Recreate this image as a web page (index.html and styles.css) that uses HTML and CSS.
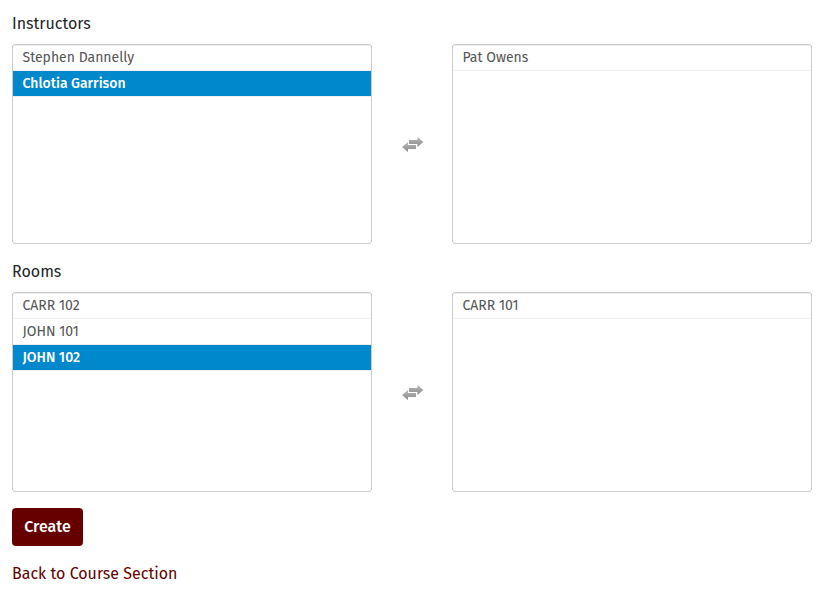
FILE: index.html
```
<!DOCTYPE html>
<html lang="en">
<head>
<meta charset="utf-8">
<title>Course Section</title>
<link rel="stylesheet" href="styles.css">
</head>
<body>
<svg width="0" height="0" class="defs">
  <defs>
    <linearGradient id="g" x1="0" y1="0" x2="0" y2="1"><stop offset="0" stop-color="#bbb"/><stop offset="1" stop-color="#8a8a8a"/></linearGradient>
    <symbol id="switch" viewBox="0 0 22 16">
      <path fill="url(#g)" d="M7 4H15.4V1L21.4 6L15.4 11V8H7Z"/>
      <path fill="url(#g)" d="M14 9H6V6L0 11L6 16V13H14Z"/>
      <path fill="none" stroke="#fff" stroke-width="1" d="M6 8.5H14.5V10"/>
    </symbol>
  </defs>
</svg>
<main>
  <section class="group">
    <h2 class="label">Instructors</h2>
    <div class="picker">
      <ul class="list">
        <li>Stephen Dannelly</li>
        <li class="selected">Chlotia Garrison</li>
      </ul>
      <svg class="switch"><use href="#switch"/></svg>
      <ul class="list">
        <li>Pat Owens</li>
      </ul>
    </div>
  </section>
  <section class="group">
    <h2 class="label">Rooms</h2>
    <div class="picker">
      <ul class="list">
        <li>CARR 102</li>
        <li>JOHN 101</li>
        <li class="selected">JOHN 102</li>
      </ul>
      <svg class="switch"><use href="#switch"/></svg>
      <ul class="list">
        <li>CARR 101</li>
      </ul>
    </div>
  </section>
  <button class="create">Create</button>
  <a class="back">Back to Course Section</a>
</main>
</body>
</html>
```
FILE: styles.css
```
* { box-sizing: border-box; }
body { margin: 0; background: #fff; color: #212529; font: 16px/24px "Fira Sans", "Noto Sans", sans-serif; }
.defs { display: block; }
main { width: 800px; margin: 12px 0 0 12px; }
.group { height: 248px; }
.label { margin: 0 0 8px; height: 24px; font-size: 16px; font-weight: 400; line-height: 24px; }
.picker { display: flex; align-items: center; justify-content: space-between; }
.list { width: 360px; height: 200px; margin: 0; padding: 0; list-style: none; border: 1px solid #ccc; border-radius: 3px; box-shadow: inset 0 1px 1px rgba(0,0,0,.075); }
.list li { height: 26px; padding: 3px 9.5px 2px; border-bottom: 1px solid #eee; color: #555; font-size: 14px; line-height: 20px; white-space: nowrap; }
.list .selected { background: #08c; color: #fff; font-weight: 500; }
.switch { width: 22px; height: 16px; margin-left: 1px; }
.create { display: block; width: 71px; height: 38px; margin: 0 0 16px; padding: 0 0 1px; border: 0; border-radius: 4px; background: #600; color: #fff; font: 500 16px/24px "Fira Sans", "Noto Sans", sans-serif; }
.back { color: #600; }
```
